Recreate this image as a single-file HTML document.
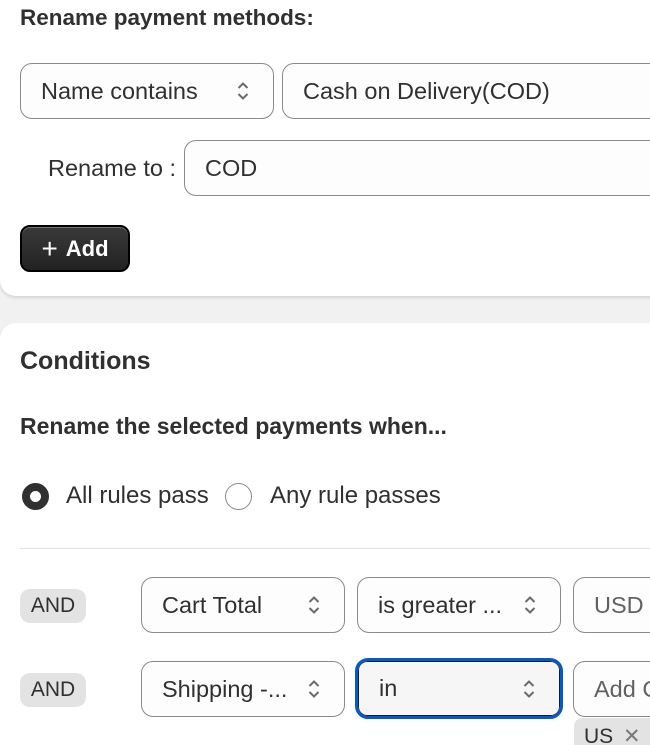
<!DOCTYPE html>
<html style="overflow:hidden"><head><style>
html,body{overflow:hidden}
body{margin:0;width:650px;height:745px;background:#f1f1f1;font-family:"Liberation Sans",sans-serif;color:#303030;position:relative}
.card{position:absolute;left:0;width:680px;background:#fff;border-radius:16px;box-shadow:0 2px 3px rgba(0,0,0,.12)}
.a{position:absolute;white-space:nowrap}
.box{position:absolute;box-sizing:border-box;border:1px solid #8a8a8a;border-radius:12px;background:#fdfdfd;font-size:23.5px;display:flex;align-items:center;padding-left:20px;color:#303030;white-space:nowrap;overflow:hidden}
.chev{position:absolute;right:23px;top:50%;margin-top:-11px;width:14px;height:22px}
.b{font-weight:bold}
.pill{position:absolute;left:20px;width:66px;height:34px;background:#e3e3e3;border-radius:10px;font-size:21px;display:flex;align-items:center;justify-content:center}
.radio{position:absolute;box-sizing:border-box;width:27px;height:27px;border-radius:50%}
</style></head><body>
<div class="card" style="top:-20px;height:316px"></div>
<div class="card" style="top:323px;height:422px;border-bottom-left-radius:0;border-bottom-right-radius:0"></div>
<div class="a b" style="left:20px;top:5px;font-size:22.5px">Rename payment methods:</div>
<div class="box" style="left:20px;top:63px;width:254px;height:56px">Name contains<svg class="chev" viewBox="0 0 14 22"><path d="M2.5 8l4.5-4.5 4.5 4.5M2.5 14l4.5 4.5 4.5-4.5" fill="none" stroke="#6b6b6b" stroke-width="2"/></svg></div>
<div class="box" style="left:282px;top:63px;width:400px;height:56px">Cash on Delivery(COD)</div>
<div class="a" style="left:48px;top:155px;font-size:23.5px">Rename to :</div>
<div class="box" style="left:184px;top:140px;width:500px;height:56px">COD</div>
<div class="a b" style="left:20px;top:225px;width:110px;height:47px;box-sizing:border-box;background:linear-gradient(#3a3a3a,#222);border:2px solid #000;border-radius:10px;color:#fff;font-size:22px;display:flex;align-items:center;justify-content:center;box-shadow:inset 0 1px 0 rgba(255,255,255,.3)"><span style="font-weight:normal;font-size:28px;margin-right:8px">+</span>Add</div>
<div class="a b" style="left:20px;top:347px;font-size:25px">Conditions</div>
<div class="a b" style="left:20px;top:413px;font-size:23px">Rename the selected payments when...</div>
<div class="radio" style="left:22px;top:483px;border:8px solid #303030"></div>
<div class="a" style="left:66px;top:482px;font-size:24px">All rules pass</div>
<div class="radio" style="left:225px;top:483px;border:1px solid #8a8a8a"></div>
<div class="a" style="left:270px;top:482px;font-size:24px">Any rule passes</div>
<div class="a" style="left:20px;top:548px;width:640px;height:1px;background:#e3e3e3"></div>
<div class="pill" style="top:589px">AND</div>
<div class="box" style="left:141px;top:577px;width:204px;height:56px">Cart Total<svg class="chev" viewBox="0 0 14 22"><path d="M2.5 8l4.5-4.5 4.5 4.5M2.5 14l4.5 4.5 4.5-4.5" fill="none" stroke="#6b6b6b" stroke-width="2"/></svg></div>
<div class="box" style="left:357px;top:577px;width:204px;height:56px">is greater ...<svg class="chev" viewBox="0 0 14 22"><path d="M2.5 8l4.5-4.5 4.5 4.5M2.5 14l4.5 4.5 4.5-4.5" fill="none" stroke="#6b6b6b" stroke-width="2"/></svg></div>
<div class="box" style="left:573px;top:577px;width:120px;height:56px;color:#616161">USD</div>
<div class="pill" style="top:673px">AND</div>
<div class="box" style="left:141px;top:661px;width:204px;height:56px">Shipping -...<svg class="chev" viewBox="0 0 14 22"><path d="M2.5 8l4.5-4.5 4.5 4.5M2.5 14l4.5 4.5 4.5-4.5" fill="none" stroke="#6b6b6b" stroke-width="2"/></svg></div>
<div class="box" style="left:355px;top:658px;width:208px;height:61px;border:3px solid #005bd3;padding:0;border-radius:13px">
<div style="position:absolute;left:0;top:0;right:0;bottom:0;border:1.5px solid #1a1a1a;border-radius:9px;background:#f6f6f6;display:flex;align-items:center;padding-left:20px;font-size:23.5px">in<svg class="chev" viewBox="0 0 14 22"><path d="M2.5 8l4.5-4.5 4.5 4.5M2.5 14l4.5 4.5 4.5-4.5" fill="none" stroke="#6b6b6b" stroke-width="2"/></svg></div></div>
<div class="box" style="left:573px;top:661px;width:120px;height:56px;color:#616161">Add C</div>
<div class="a" style="left:574px;top:718px;width:90px;height:40px;background:#e3e3e3;border-radius:8px;font-size:21px;padding:6px 0 0 10px;box-sizing:border-box">US <span style="color:#777;margin-left:4px">✕</span></div>
</body></html>
